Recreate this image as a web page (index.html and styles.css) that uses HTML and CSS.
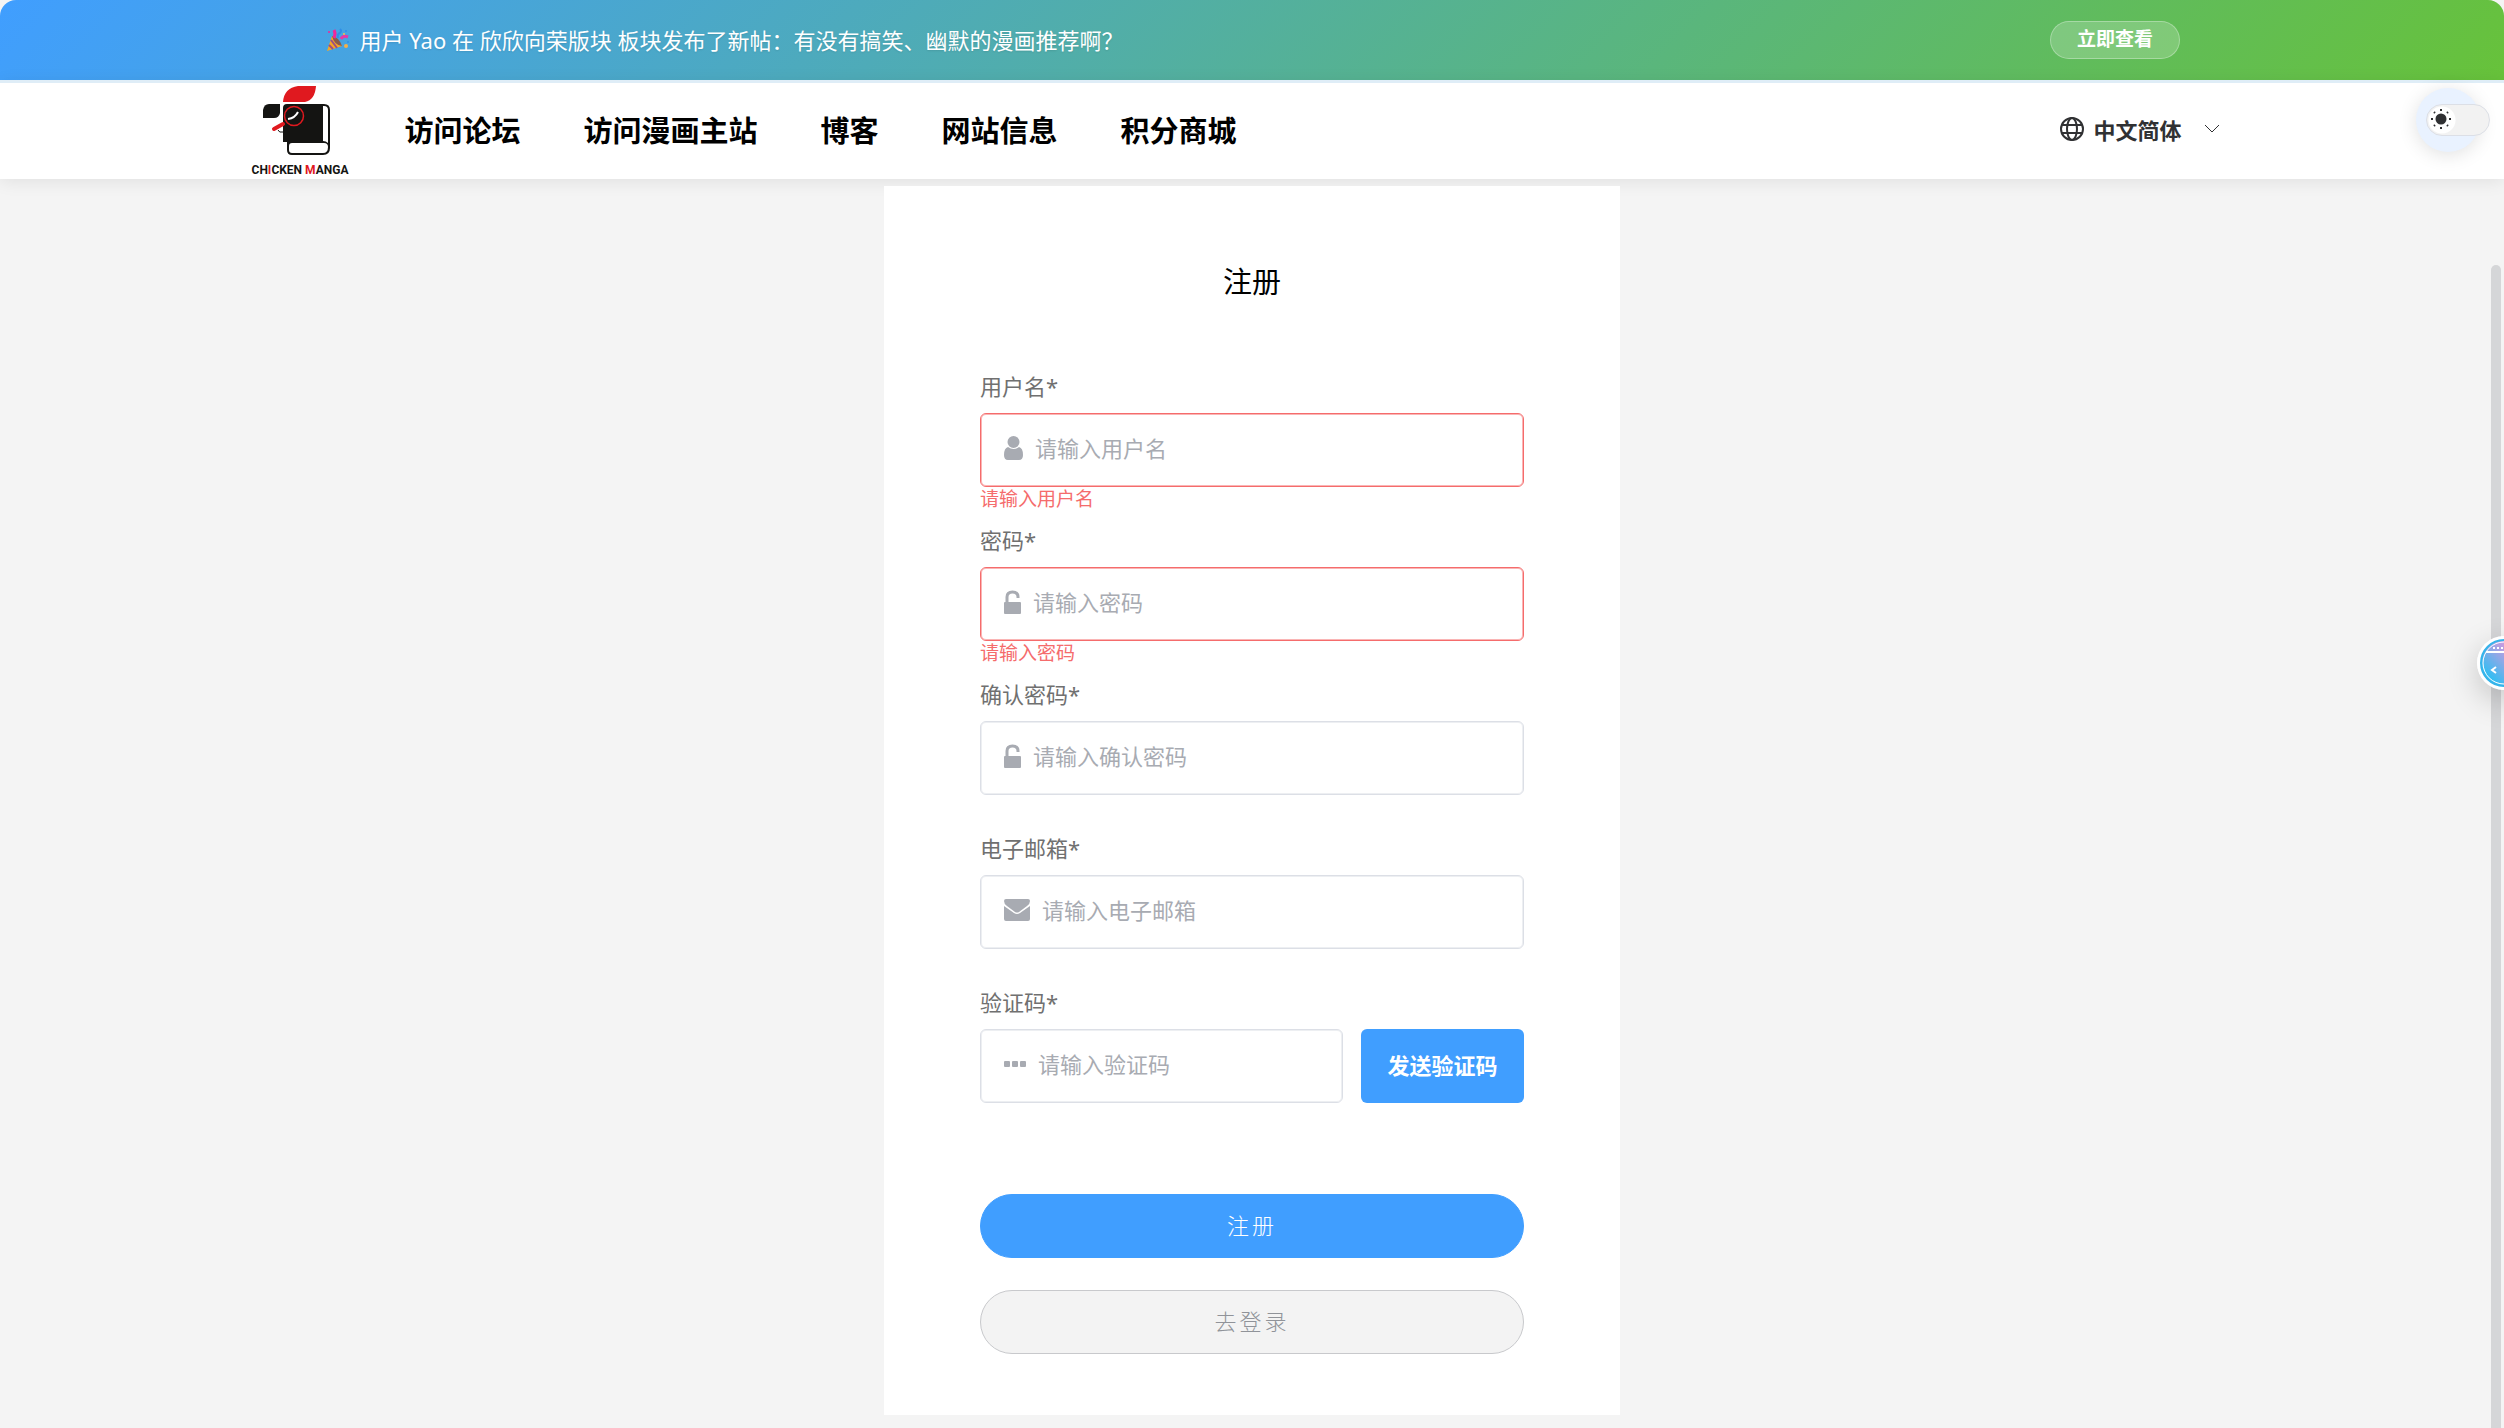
FILE: index.html
```html
<!DOCTYPE html>
<html lang="zh-CN">
<head>
    <meta charset="UTF-8">
    <meta name="viewport" content="width=device-width, initial-scale=1">
    <title>注册 - CHICKEN MANGA</title>
    <link rel="stylesheet" href="styles.css">
</head>
<body>

<!--公告条-->
<div class="notice">
    <p class="notice_text">
        <svg class="party" viewBox="0 0 24 24" aria-hidden="true">
            <path d="M6 8 L1 23 L16 18 Z" fill="#f5a623"/>
            <path d="M5 12 L11 20 M3 17 L7 21" stroke="#9b4f86" stroke-width="2"/>
            <path d="M6 8 Q13 9 16 18 Q8 17 6 8" fill="#8a5a4c"/>
            <path d="M8 2 Q10 6 8 10" stroke="#f0269a" stroke-width="3" fill="none"/>
            <path d="M15 11 Q17 7 22 9" stroke="#e23aa8" stroke-width="3" fill="none"/>
            <path d="M12 10 Q11 6 14 5 Q16 3 14 1" stroke="#2f8fe8" stroke-width="2" fill="none"/>
            <circle cx="3" cy="4" r="1" fill="#f0269a"/>
            <circle cx="20" cy="3" r="1" fill="#2f8fe8"/>
            <circle cx="18" cy="6" r="1" fill="#f5c04a"/>
            <circle cx="20" cy="18" r="2" fill="#f5b04a"/>
            <circle cx="22" cy="14" r="1" fill="#2f8fe8"/>
        </svg>
        <span>用户 Yao 在 欣欣向荣版块 板块发布了新帖：有没有搞笑、幽默的漫画推荐啊？</span>
    </p>
    <button class="notice_btn" type="button">立即查看</button>
</div>

<!--导航-->
<header class="header">
    <a class="logo" href="#" aria-label="CHICKEN MANGA">
        <svg viewBox="0 0 100 90">
            <path d="M33 16 Q34 2 48 0 H66 Q65 14 55 16 Z" fill="#e0191f"/>
            <path d="M13 24 Q14 18 19 18 H30 V27 Q29 32 24 32 H13 Z" fill="#141412"/>
            <path d="M37 18 H74 Q80 18 80 24 V62 Q80 69 73 69 H42 Q37 69 37 64 V56 H33 V22 Q33 18 37 18 Z" fill="#141412"/>
            <path d="M74 20 Q78 20 78 24 V57 Q76 55 73 55 V20 Z" fill="#fff"/>
            <path d="M42 57 H74 Q78 57 78 61 Q78 67 73 67 H42 Q39 67 39 64 V60 Q39 57 42 57 Z" fill="#fff"/>
            <path d="M28 44 Q29 47 33 46" stroke="#141412" stroke-width="1" fill="none"/>
            <path d="M24 43 L33 38" stroke="#e0191f" stroke-width="4" stroke-linecap="round"/>
            <circle cx="44" cy="30" r="9.500" fill="#141412" stroke="#e0191f" stroke-width="1.500"/>
            <path d="M38 33 Q45 32 48 26" stroke="#fff" stroke-width="2" fill="none"/>
            <text class="logo_text" x="50" y="88" text-anchor="middle">CH<tspan class="red">I</tspan>CKEN <tspan class="red">M</tspan>ANGA</text>
        </svg>
    </a>
    <nav class="nav">
        <a href="#">访问论坛</a>
        <a href="#">访问漫画主站</a>
        <a href="#">博客</a>
        <a href="#">网站信息</a>
        <a href="#">积分商城</a>
    </nav>
    <button class="lang" type="button">
        <svg class="globe" viewBox="0 0 24 24" fill="none" stroke="currentColor" stroke-width="2" aria-hidden="true">
            <circle cx="12" cy="12" r="11"/>
            <ellipse cx="12" cy="12" rx="5" ry="11"/>
            <path d="M2 8 H22 M2 16 H22"/>
        </svg>
        <span>中文简体</span>
        <svg class="arrow" viewBox="0 0 16 10" fill="none" stroke="currentColor" aria-hidden="true">
            <path d="M1 1 L8 8 L15 1"/>
        </svg>
    </button>
</header>

<!--日夜间切换-->
<div class="theme">
    <label class="theme_switch">
        <input type="checkbox" aria-label="切换主题">
        <svg class="sun" viewBox="0 0 20 20" aria-hidden="true">
            <circle cx="10" cy="10" r="5.500" fill="#303133"/>
            <path d="M10 0 V2 M10 18 V20 M0 10 H2 M18 10 H20 M3 3 L4 4 M16 16 L17 17 M3 17 L4 16 M16 4 L17 3" stroke="#303133" stroke-width="2"/>
        </svg>
    </label>
</div>

<main class="card">
    <h1 class="title">注册</h1>
    <form class="form">
        <div class="field error">
            <label for="username">用户名*</label>
            <div class="box">
                <svg width="19" height="24" viewBox="0 0 19 24" aria-hidden="true">
                    <circle cx="9.500" cy="6" r="6"/>
                    <path d="M4 11 Q9.500 15 15 11 Q19 12 19 19 Q19 24 15 24 H4 Q0 24 0 19 Q0 12 4 11 Z"/>
                </svg>
                <input id="username" type="text" placeholder="请输入用户名">
            </div>
            <p class="tip">请输入用户名</p>
        </div>
        <div class="field error">
            <label for="password">密码*</label>
            <div class="box">
                <svg width="17" height="24" viewBox="0 0 17 24" aria-hidden="true">
                    <path d="M3 12 V7 Q3 2 8.500 2 Q14 2 14 7 V8" fill="none" stroke="#a8abb2" stroke-width="3"/>
                    <rect y="12" width="17" height="12" rx="1"/>
                </svg>
                <input id="password" type="password" placeholder="请输入密码">
            </div>
            <p class="tip">请输入密码</p>
        </div>
        <div class="field">
            <label for="password2">确认密码*</label>
            <div class="box">
                <svg width="17" height="24" viewBox="0 0 17 24" aria-hidden="true">
                    <path d="M3 12 V7 Q3 2 8.500 2 Q14 2 14 7 V8" fill="none" stroke="#a8abb2" stroke-width="3"/>
                    <rect y="12" width="17" height="12" rx="1"/>
                </svg>
                <input id="password2" type="password" placeholder="请输入确认密码">
            </div>
            <p class="tip"></p>
        </div>
        <div class="field">
            <label for="email">电子邮箱*</label>
            <div class="box">
                <svg width="26" height="22" viewBox="0 0 26 22" aria-hidden="true">
                    <path d="M2 0 H24 Q26 0 26 2 Q26 5 23 7 L15 13 Q13 14 11 13 L3 7 Q0 5 0 2 Q0 0 2 0 Z"/>
                    <path d="M0 7 L10 14 Q13 16 16 14 L26 7 V20 Q26 22 24 22 H2 Q0 22 0 20 Z"/>
                </svg>
                <input id="email" type="email" placeholder="请输入电子邮箱">
            </div>
            <p class="tip"></p>
        </div>
        <div class="field">
            <label for="code">验证码*</label>
            <div class="row">
                <div class="box">
                    <svg width="22" height="6" viewBox="0 0 22 6" aria-hidden="true">
                        <rect width="6" height="6" rx="1"/>
                        <rect x="8" width="6" height="6" rx="1"/>
                        <rect x="16" width="6" height="6" rx="1"/>
                    </svg>
                    <input id="code" type="text" placeholder="请输入验证码">
                </div>
                <button class="send" type="button">发送验证码</button>
            </div>
            <p class="tip"></p>
        </div>
        <div class="btns">
            <button class="btn primary" type="submit">注册</button>
            <button class="btn" type="button">去登录</button>
        </div>
    </form>
</main>

<div class="scrollbar"></div>

<!--侧边悬浮按钮-->
<button class="float_btn" type="button" aria-label="展开">
    <svg viewBox="0 0 54 54">
        <defs>
            <linearGradient id="ball" x1="0" y1="1" x2="1" y2="0">
                <stop offset="0.200" stop-color="#35bdf2"/>
                <stop offset="0.700" stop-color="#c79be0"/>
            </linearGradient>
        </defs>
        <circle cx="27" cy="27" r="27" fill="#fff"/>
        <circle cx="27" cy="27" r="23" fill="url(#ball)" stroke="#35b4ea" stroke-width="2"/>
        <circle cx="27" cy="27" r="21" fill="none" stroke="#fff"/>
        <path d="M9 16 H45" stroke="#fff" stroke-width="2"/>
        <path d="M16 12 H18 M20 12 H22 M24 12 H26" stroke="#fff" stroke-width="2"/>
        <path d="M19 31 L15 34 L19 37" stroke="#fff" stroke-width="2" fill="none"/>
    </svg>
</button>

</body>
</html>
```
FILE: styles.css
```css
*{
    margin: 0;
    padding: 0;
    box-sizing: border-box;
}
body{
    min-height: 100vh;
    background-color: #f4f4f4;
    font-family: "Noto Sans", "Noto Sans CJK SC", sans-serif;
    font-size: 22px;
    color: #303133;
    overflow-x: hidden;
}
a{
    color: inherit;
    text-decoration: none;
}
button{
    border: none;
    font-family: inherit;
    cursor: pointer;
}

/*公告条*/
.notice{
    height: 80px;
    padding: 0 324px 0 13%;
    display: flex;
    align-items: center;
    justify-content: space-between;
    border-radius: 16px 16px 0 0;
    background: linear-gradient(135deg, #409eff 0%, #67c23a 100%);
    color: #fff;
}
.notice_text{
    display: flex;
    align-items: center;
    gap: 10px;
    line-height: 32px;
    text-shadow: 0 1px 2px rgba(0,0,0,.1);
}
.party{
    width: 24px;
    height: 24px;
}
.notice_btn{
    height: 38px;
    padding: 0 26px 2px;
    border: 1px solid rgba(255,255,255,.3);
    border-radius: 19px;
    background-color: rgba(255,255,255,.2);
    color: #fff;
    font-size: 19px;
    font-weight: bold;
    line-height: 34px;
}

/*导航*/
.header{
    height: 99px;
    padding: 0 10%;
    display: flex;
    align-items: center;
    border-top: 3px solid #dfedf7;
    background-color: #fff;
    box-shadow: 0 3px 16px rgba(0,0,0,.08);
}
.logo svg{
    display: block;
    width: 100px;
    height: 90px;
}
.logo_text{
    font-family: Roboto, sans-serif;
    font-size: 12px;
    font-weight: bold;
    fill: #141412;
}
.logo_text .red{
    fill: #e0191f;
}
.nav{
    margin-left: 54px;
    padding-bottom: 4px;
    display: flex;
    gap: 63px;
    color: #000;
    font-size: 29px;
    font-weight: bold;
}
.lang{
    margin-left: auto;
    padding: 0 34px 4px;
    display: flex;
    align-items: center;
    background: none;
    color: #303133;
    font-size: 22px;
    font-weight: bold;
}
.globe{
    width: 24px;
    height: 24px;
    margin-right: 10px;
}
.arrow{
    width: 16px;
    height: 10px;
    margin-left: 22px;
}

/*日夜间切换*/
.theme{
    width: 64px;
    height: 64px;
    position: absolute;
    top: 88px;
    right: 24px;
    border-radius: 50%;
    background-color: #e9f2ff;
    box-shadow: 0 3px 19px rgba(0,0,0,.12);
}
.theme_switch{
    position: absolute;
    top: 16px;
    left: 10px;
}
.theme_switch input{
    display: block;
    appearance: none;
    width: 64px;
    height: 32px;
    border: 1px solid #dcdfe6;
    border-radius: 16px;
    background: radial-gradient(circle at 15px 15px, #fff 13px, #f2f2f2 14px);
}
.sun{
    width: 20px;
    height: 20px;
    position: absolute;
    top: 5px;
    left: 5px;
}

/*注册表单*/
.card{
    width: 736px;
    max-width: 100%;
    margin: 7px auto 0;
    padding: 76px 96px 61px;
    background-color: #fff;
}
.title{
    margin-bottom: 63px;
    color: #000;
    font-size: 29px;
    font-weight: normal;
    line-height: 40px;
    text-align: center;
}
.field label{
    display: block;
    padding-bottom: 6px;
    color: #707070;
    line-height: 42px;
}
.box{
    height: 74px;
    min-width: 0;
    padding: 0 23px 4px;
    display: flex;
    align-items: center;
    gap: 12px;
    flex: 1;
    border: 1px solid #dcdfe6;
    border-radius: 6px;
    box-shadow: inset 0 0 0 1px rgba(220,223,230,.5);
}
.box svg{
    flex: none;
    fill: #a8abb2;
}
.box input{
    flex: 1;
    min-width: 0;
    height: 68px;
    border: none;
    outline: none;
    background: none;
    font-family: inherit;
    font-size: 22px;
}
.box input::placeholder{
    color: #a8abb2;
}
.tip{
    height: 32px;
    color: #f56c6c;
    font-size: 19px;
    line-height: 24px;
}
.error .box{
    border-color: #f56c6c;
    box-shadow: inset 0 0 0 1px rgba(245,108,108,.5);
}
.row{
    display: flex;
    gap: 18px;
}
.send{
    flex: none;
    width: 163px;
    padding-bottom: 4px;
    border-radius: 6px;
    background-color: #409eff;
    color: #fff;
    font-size: 22px;
    font-weight: bold;
}
.btns{
    margin-top: 59px;
    display: flex;
    flex-direction: column;
    gap: 32px;
}
.btn{
    height: 64px;
    padding-bottom: 4px;
    border: 1px solid #c8c9cc;
    border-radius: 32px;
    background-color: #f3f3f3;
    color: #909399;
    font-size: 22px;
    font-weight: 300;
    letter-spacing: 3px;
}
.primary{
    border-color: #409eff;
    background-color: #409eff;
    color: #fff;
}

/*滚动条*/
.scrollbar{
    width: 10px;
    position: fixed;
    top: 265px;
    right: 3px;
    bottom: 0;
    border-radius: 5px 5px 0 0;
    background-color: #d5d6d8;
}
.float_btn{
    width: 54px;
    height: 54px;
    position: fixed;
    top: 636px;
    right: -27px;
    border-radius: 50%;
    background: none;
    box-shadow: 0 10px 32px rgba(0,0,0,.2);
}
.float_btn svg{
    display: block;
}
```
